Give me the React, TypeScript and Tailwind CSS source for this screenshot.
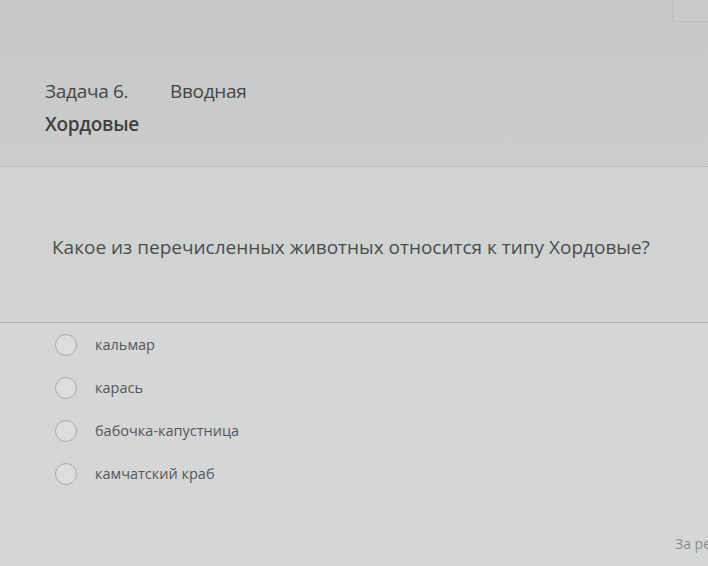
export default function App() {
  const options = ["кальмар", "карась", "бабочка-капустница", "камчатский краб"];

  return (
    <div
      className="relative h-[566px] w-[708px] overflow-hidden bg-[#d5d7d6] text-[#474848]"
      style={{ fontFamily: '"Open Sans", "Noto Sans", sans-serif' }}
    >
      {/* task header */}
      <div className="h-[167px] border-b border-[#b9bbbb] bg-gradient-to-b from-[#c6c8c9] to-[#cbcdcd] pl-[45px] pt-[78px]">
        <div className="flex text-[19px] leading-[26px] tracking-[-0.3px] text-[#454646]">
          <span className="w-[125px]">Задача 6.</span>
          <span>Вводная</span>
        </div>
        <div className="mt-[8px] text-[19px] font-semibold leading-[24px] tracking-[-0.3px] text-[#3f4040]">
          Хордовые
        </div>
      </div>

      <div className="absolute right-0 top-0 h-[22px] w-[36px] rounded-bl-[4px] border-b border-l border-[#bdbfbf] bg-[#c9cbcb]" />

      {/* question */}
      <div className="h-[156px] border-b border-[#aeb0af] bg-[#d1d3d2] pl-[52px] pt-[67px]">
        <p className="text-[19px] leading-[26px] tracking-[0px] text-[#4b4c4c]">
          Какое из перечисленных животных относится к типу Хордовые?
        </p>
      </div>

      {/* answers */}
      <div className="flex flex-col pl-[55px]">
        {options.map((o) => (
          <label key={o} className="flex h-[43px] items-center gap-[18px]">
            <span className="h-[22px] w-[22px] rounded-full border-[1.5px] border-[#a9abaa] bg-[#dcdedd]" />
            <span className="text-[14.5px] leading-[20px] text-[#555656]">{o}</span>
          </label>
        ))}
      </div>

      <div className="mt-[39px] whitespace-nowrap pl-[675px] text-[14px] leading-[20px] text-[#8a8c8c]">
        За решение задачи
      </div>
    </div>
  );
}
